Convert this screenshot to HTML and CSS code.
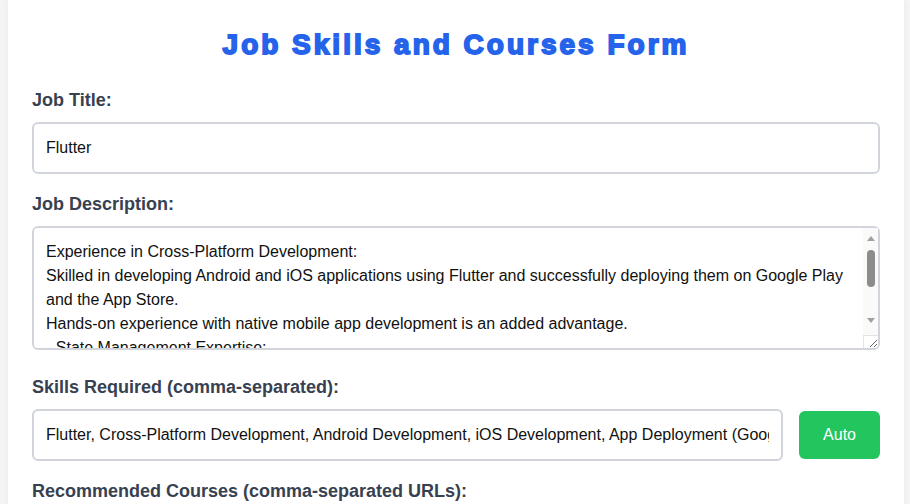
FILE: index.html
```html
<!DOCTYPE html>
<html lang="en">
<head>
<meta charset="utf-8">
<title>Job Skills and Courses Form</title>
<link rel="stylesheet" href="styles.css">
</head>
<body>
<div class="topbar"></div>
<div class="page">
  <form class="card">
    <h1 class="title">Job Skills and Courses Form</h1>

    <div class="group">
      <label class="label" for="jobTitle">Job Title:</label>
      <input class="field" id="jobTitle" type="text" value="Flutter">
    </div>

    <div class="group">
      <label class="label" for="jobDesc">Job Description:</label>
      <div class="area-wrap">
        <textarea class="field area" id="jobDesc" rows="4">Experience in Cross-Platform Development:
Skilled in developing Android and iOS applications using Flutter and successfully deploying them on Google Play and the App Store.
Hands-on experience with native mobile app development is an added advantage.
- State Management Expertise:
Proficient in state management solutions such as Provider, Bloc, GetX and Riverpod.
- API Integration:
Experience integrating RESTful APIs and Firebase services.
- UI/UX:
Ability to build responsive, pixel-perfect user interfaces.</textarea>
        <div class="vscroll" aria-hidden="true">
          <span class="arrow-up"></span>
          <span class="thumb"></span>
          <span class="arrow-down"></span>
        </div>
        <div class="corner" aria-hidden="true"></div>
      </div>
    </div>

    <div class="group">
      <label class="label" for="skills">Skills Required (comma-separated):</label>
      <div class="row">
        <input class="field grow" id="skills" type="text" value="Flutter, Cross-Platform Development, Android Development, iOS Development, App Deployment (Google Play, App Store), State Management, API Integration">
        <button class="btn" type="button">Auto</button>
      </div>
    </div>

    <div class="group">
      <label class="label" for="courses">Recommended Courses (comma-separated URLs):</label>
      <div class="row">
        <input class="field grow" id="courses" type="text" value="">
        <button class="btn" type="button">Auto</button>
      </div>
    </div>
  </form>
</div>
</body>
</html>
```
FILE: styles.css
```css
html, body {
  margin: 0;
  padding: 0;
}

body {
  background: #f5f5f5;
  font-family: "Liberation Sans", Arial, sans-serif;
  font-size: 16px;
  line-height: 1.5;
  color: #111827;
}

.topbar {
  height: 0;
  position: relative;
  z-index: 1;
  box-shadow: 0 2px 6px rgba(0, 0, 0, 0.12);
}

.page {
  padding: 0 6px 24px 8px;
}

.card {
  display: block;
  background: #ffffff;
  padding: 24px;
  box-shadow: 0 0 8px rgba(0, 0, 0, 0.05);
}

.title {
  margin: 0 0 21px;
  font-size: 28px;
  line-height: 42px;
  font-weight: 700;
  text-align: center;
  color: #2563eb;
  letter-spacing: 3px;
  -webkit-text-stroke: 1.8px #2563eb;
}

.group {
  margin-bottom: 17px;
}

.label {
  display: block;
  margin-bottom: 8px;
  font-size: 18px;
  line-height: 27px;
  font-weight: 700;
  color: #374151;
}

.field {
  display: block;
  box-sizing: border-box;
  width: 100%;
  margin: 0;
  padding: 12px;
  border: 2px solid #d1d5db;
  border-radius: 6px;
  background: #ffffff;
  font-family: inherit;
  font-size: 16px;
  line-height: 24px;
  color: #111111;
  outline: none;
}

.area-wrap {
  position: relative;
  margin-bottom: 24px;
}

.area {
  padding-right: 27px;
  resize: vertical;
}

/* drawn classic scrollbar, laid over the textarea's right edge */
.vscroll {
  position: absolute;
  top: 2px;
  right: 2px;
  width: 15px;
  height: 107px;
  box-sizing: border-box;
  padding: 8px 0 12px;
  display: flex;
  flex-direction: column;
  align-items: center;
  background: #fafafa;
  pointer-events: none;
}

.arrow-up {
  width: 0;
  height: 0;
  border-left: 4px solid transparent;
  border-right: 4px solid transparent;
  border-bottom: 5px solid #a0a0a0;
}

.thumb {
  width: 8px;
  height: 37px;
  margin-top: 9px;
  border-radius: 4px;
  background: #8c8c8c;
}

.arrow-down {
  width: 0;
  height: 0;
  margin-top: auto;
  border-left: 4px solid transparent;
  border-right: 4px solid transparent;
  border-top: 5px solid #a0a0a0;
}

.corner {
  position: absolute;
  right: 2px;
  bottom: 2px;
  width: 14px;
  height: 12px;
  border-left: 1px solid #e3e3e3;
  border-top: 1px solid #e3e3e3;
  pointer-events: none;
}

.row {
  display: flex;
  align-items: center;
  gap: 16px;
}

.grow {
  flex: 1;
  min-width: 0;
  width: auto;
}

.btn {
  flex: none;
  padding: 12px 24px;
  border: 0;
  border-radius: 6px;
  background: #22c55e;
  color: #ffffff;
  font-family: inherit;
  font-size: 16px;
  line-height: 24px;
  cursor: pointer;
}
```
